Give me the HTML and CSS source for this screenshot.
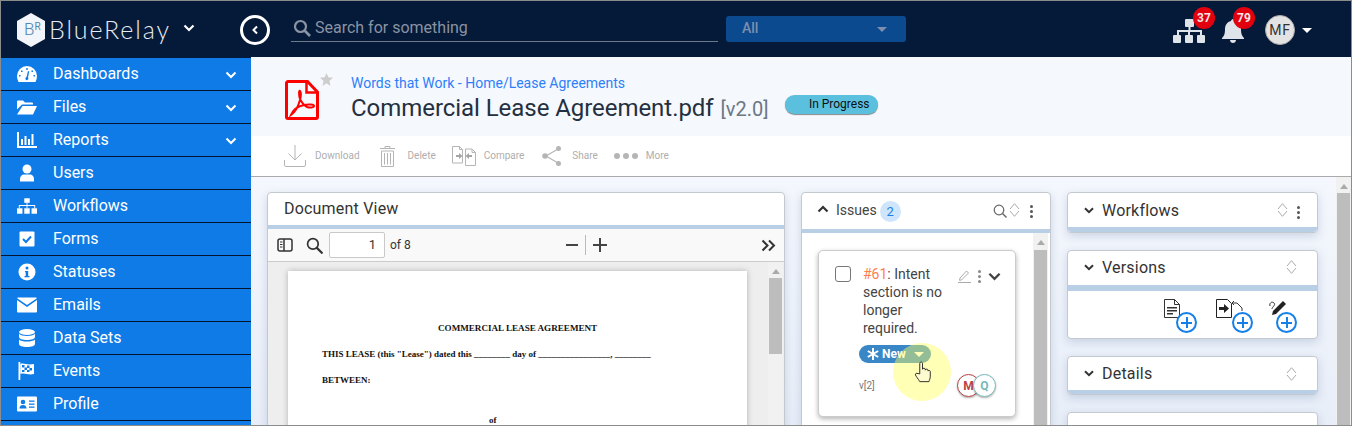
FILE: index.html
```html
<!DOCTYPE html>
<html lang="en">
<head>
<meta charset="utf-8">
<title>BlueRelay - Commercial Lease Agreement</title>
<link rel="stylesheet" href="styles.css">
</head>
<body>
<div class="app">
  <header class="topbar">
    <div class="brand">
      <svg class="hex" viewBox="0 0 28 34"><path d="M14 0 28 8v18l-14 8-14-8V8z" fill="#f2f5f9"/></svg>
      <span class="hex-text"><b>B</b><i>R</i></span>
      <span class="brand-name">BlueRelay</span>
      <svg class="brand-chev" viewBox="0 0 12 8"><path d="M1.500 1.500 6 6l4.500-4.500" fill="none" stroke="#fff" stroke-width="2.200"/></svg>
    </div>
    <div class="back"><svg viewBox="0 0 8 10"><path d="M6 1.500 2.500 5 6 8.500" fill="none" stroke="#fff" stroke-width="2"/></svg></div>
    <div class="search">
      <svg viewBox="0 0 18 18"><circle cx="7.500" cy="7.500" r="5.500" fill="none" stroke="#8a93a3" stroke-width="2.200"/><path d="m11.500 11.500 5.500 5.500" stroke="#8a93a3" stroke-width="2.600"/></svg>
      <span>Search for something</span>
    </div>
    <div class="scope"><span>All</span><i class="caret caret-dim"></i></div>
    <div class="top-right">
      <div class="top-icon org">
        <svg viewBox="0 0 32 24"><g fill="#dfe3ea"><rect x="12" y="0" width="9" height="8" rx="1"/><rect x="0" y="16" width="8" height="8" rx="1"/><rect x="12" y="16" width="8" height="8" rx="1"/><rect x="24" y="16" width="8" height="8" rx="1"/><path d="M15.500 8h2v3H29v5h-2v-3h-10v3h-2v-3H6v3H4v-5h11.500z"/></g></svg>
        <span class="badge">37</span>
      </div>
      <div class="top-icon bell">
        <svg viewBox="0 0 22 24"><path d="M11 0c1 0 2 1 2 2 4 1 6 4 6 8 0 5 1 7 3 9v1H0v-1c2-2 3-4 3-9 0-4 2-7 6-8 0-1 1-2 2-2zM8 21h6c0 2-1.500 3-3 3s-3-1-3-3z" fill="#dfe3ea"/></svg>
        <span class="badge">79</span>
      </div>
      <div class="avatar">MF</div>
      <i class="caret caret-white"></i>
    </div>
  </header>
  <div class="body">
    <nav class="sidebar">
      <a class="nav-item">
        <svg viewBox="0 0 20 16"><path d="M10 0a10 10 0 0 1 10 10c0 2-.5 4-1.500 6h-17C.5 14 0 12 0 10A10 10 0 0 1 10 0z" fill="#fff"/><g fill="#0f7be6"><rect x="9.300" y="2" width="1.400" height="2"/><rect x="4" y="4.500" width="1.500" height="1.500"/><rect x="14.500" y="4.500" width="1.500" height="1.500"/><rect x="2" y="9" width="1.500" height="1.500"/><rect x="16.500" y="9" width="1.500" height="1.500"/><path d="m11 5 1.200.4-1.200 6.100a1.500 1.500 0 1 1-1.500-.4z"/></g></svg>
        <span>Dashboards</span><svg class="chev" viewBox="0 0 12 8"><path d="M1.500 1.500 6 6l4.500-4.500" fill="none" stroke="#fff" stroke-width="2"/></svg>
      </a>
      <a class="nav-item">
        <svg viewBox="0 0 20 15"><path d="M0 2a1 1 0 0 1 1-1h5l2 2h7a1 1 0 0 1 1 1v1H5L0 10z" fill="#fff"/><path d="M5.500 6.500H20L16 15H0z" fill="#fff"/></svg>
        <span>Files</span><svg class="chev" viewBox="0 0 12 8"><path d="M1.500 1.500 6 6l4.500-4.500" fill="none" stroke="#fff" stroke-width="2"/></svg>
      </a>
      <a class="nav-item">
        <svg viewBox="0 0 20 16"><path d="M0 0h2v14h18v2H0z" fill="#fff"/><g fill="#fff"><rect x="4" y="7" width="2" height="6"/><rect x="7.500" y="4" width="2" height="9"/><rect x="11" y="7" width="2" height="6"/><rect x="14.500" y="2" width="2" height="11"/></g></svg>
        <span>Reports</span><svg class="chev" viewBox="0 0 12 8"><path d="M1.500 1.500 6 6l4.500-4.500" fill="none" stroke="#fff" stroke-width="2"/></svg>
      </a>
      <a class="nav-item">
        <svg viewBox="0 0 20 17"><circle cx="10" cy="4.500" r="4.500" fill="#fff"/><path d="M3 17v-2.500C3 11.500 5 10 7 10h6c2 0 4 1.500 4 4.500V17z" fill="#fff"/></svg>
        <span>Users</span>
      </a>
      <a class="nav-item">
        <svg viewBox="0 0 22 17"><g fill="#fff"><rect x="8" y="0" width="6" height="5"/><rect x="0" y="11" width="6" height="6"/><rect x="8" y="11" width="6" height="6"/><rect x="16" y="11" width="6" height="6"/><path d="M10.500 5h1v2.500H20V11h-1V8.500h-7.500V11h-1V8.500H3V11H2V7.500h8.500z"/></g></svg>
        <span>Workflows</span>
      </a>
      <a class="nav-item">
        <svg viewBox="0 0 20 16"><rect x="2.500" y="0.500" width="15" height="15" rx="1" fill="#fff"/><path d="m6 8 3 3 5-5.500" fill="none" stroke="#0f7be6" stroke-width="2"/></svg>
        <span>Forms</span>
      </a>
      <a class="nav-item">
        <svg viewBox="0 0 18 18"><circle cx="9" cy="9" r="8.500" fill="#fff"/><circle cx="9" cy="5" r="1.500" fill="#0f7be6"/><path d="M7 8h3.200v5H11.500v1.300h-5V13h1.200V9.300H7z" fill="#0f7be6"/></svg>
        <span>Statuses</span>
      </a>
      <a class="nav-item">
        <svg viewBox="0 0 20 15"><path d="M1 0h18a1 1 0 0 1 .9.700L10 7.500.100.700A1 1 0 0 1 1 0z" fill="#fff"/><path d="m0 2.500 10 7 10-7V14a1 1 0 0 1-1 1H1a1 1 0 0 1-1-1z" fill="#fff"/></svg>
        <span>Emails</span>
      </a>
      <a class="nav-item">
        <svg viewBox="0 0 18 18"><g fill="#fff"><ellipse cx="9" cy="3" rx="8" ry="3"/><path d="M1 4.800C2.500 6.500 5.500 7 9 7s6.500-.5 8-2.200V8c0 1.700-3.500 3-8 3S1 9.700 1 8z"/><path d="M1 10.500c1.500 1.500 4.500 2 8 2s6.500-.5 8-2V15c0 1.700-3.500 3-8 3s-8-1.300-8-3z"/></g></svg>
        <span>Data Sets</span>
      </a>
      <a class="nav-item">
        <svg viewBox="0 0 18 18"><rect x="0.500" y="0" width="1.800" height="18" fill="#fff"/><path d="M2.300 2c4-1.500 6 1.500 13.700 0v10c-6 1.500-9-1.500-13.700 0z" fill="#fff"/><g fill="#0f7be6"><rect x="4" y="3" width="2.500" height="2.500"/><rect x="9" y="3.500" width="2.500" height="2.500"/><rect x="6.500" y="5.500" width="2.500" height="2.500"/><rect x="11.500" y="6" width="2.500" height="2.500"/><rect x="4" y="8" width="2.500" height="2"/><rect x="9" y="8" width="2.500" height="2"/></g></svg>
        <span>Events</span>
      </a>
      <a class="nav-item">
        <svg viewBox="0 0 20 15"><rect width="20" height="15" rx="1" fill="#fff"/><circle cx="6" cy="5.500" r="2.300" fill="#0f7be6"/><path d="M2.500 12c0-2.500 1.500-3.500 3.500-3.500s3.500 1 3.500 3.500z" fill="#0f7be6"/><g fill="#0f7be6"><rect x="12" y="4" width="5.500" height="1.300"/><rect x="12" y="7" width="5.500" height="1.300"/><rect x="12" y="10" width="5.500" height="1.300"/></g></svg>
        <span>Profile</span>
      </a>
    </nav>
    <main class="main">
      <section class="file-head">
        <div class="pdf-icon">
          <svg viewBox="0 0 34 40"><path d="M1.500 3a1.500 1.500 0 0 1 1.500-1.500h19.500L32.500 12v25a1.500 1.500 0 0 1-1.500 1.500H3A1.500 1.500 0 0 1 1.500 37z" fill="none" stroke="#f00" stroke-width="3"/><path d="M21.500 2v10.500h10.500" fill="none" stroke="#f00" stroke-width="2.500"/><path d="M6 35c3-2 7-8 9-15 1-4 1-8 0-9s-1.500 3 0 8c2 4 5 7 7 8 3 1 7 .5 7-1s-5-2-10-1c-5 1-10 3-13 10z" fill="none" stroke="#f00" stroke-width="2"/></svg>
          <svg class="star" viewBox="0 0 14 14"><path d="m7 0 2 4.700 5 .4-3.800 3.300L11.300 14 7 11 2.700 14l1.100-5.600L0 5.100l5-.4z" fill="#cdcdcd"/></svg>
        </div>
        <div class="file-info">
          <a class="crumb">Words that Work - Home/Lease Agreements</a>
          <div class="title-row">
            <h1>Commercial Lease Agreement.pdf <small>[v2.0]</small></h1>
            <span class="status">In Progress</span>
          </div>
        </div>
      </section>
      <section class="actions">
        <div class="action"><svg class="a-dl" viewBox="0 0 22 22"><path d="M11 0v15M4.500 8.500 11 15l6.500-6.500M.5 15v5a1.500 1.500 0 0 0 1.500 1.500h18a1.500 1.500 0 0 0 1.500-1.500v-5" fill="none" stroke="#b5b5b5"/></svg><span>Download</span></div>
        <div class="action"><svg class="a-del" viewBox="0 0 15 21"><path d="M0 2.500h15M5 2.500V.5h5v2M1.500 5h12v15.500h-12zM4.500 7v11.500M7.500 7v11.500M10.500 7v11.500" fill="none" stroke="#b5b5b5"/></svg><span>Delete</span></div>
        <div class="action"><svg class="a-cmp" viewBox="0 0 24 20"><g fill="none" stroke="#b5b5b5"><path d="M.5.500h7l3 3V17H.5zM13.500 3H20l3.500 3.500v13h-10zM7.500.5v3h3M20 3v3.500h3.500"/></g><path d="M4 8h3V6l3.500 3L7 12v-2H4zM20 8h-3V6l-3.500 3L17 12v-2h3z" fill="#a5a5a5" transform="translate(0 1)"/></svg><span>Compare</span></div>
        <div class="action"><svg class="a-sh" viewBox="0 0 20 20"><path d="M16 3 4 10l12 7" fill="none" stroke="#b5b5b5" stroke-width="1.200"/><circle cx="16.500" cy="2.500" r="2.500" fill="#b5b5b5"/><circle cx="3" cy="10" r="2.800" fill="#b5b5b5"/><circle cx="16.500" cy="17.500" r="2.500" fill="#b5b5b5"/></svg><span>Share</span></div>
        <div class="action"><span class="dots"><i></i><i></i><i></i></span><span>More</span></div>
      </section>
      <section class="workspace">
        <div class="columns">
          <article class="panel doc">
            <h2 class="doc-title">Document View</h2>
            <div class="doc-tools">
              <svg class="t-side" viewBox="0 0 16 14"><rect x="1" y="1" width="14" height="12" rx="2" fill="none" stroke="#333" stroke-width="1.500"/><path d="M7 1v12" stroke="#333" stroke-width="1.500"/><path d="M3 4h2.500M3 6.500h2.500M3 9h2.500" stroke="#333"/></svg>
              <svg class="t-find" viewBox="0 0 16 16"><circle cx="6.500" cy="6.500" r="5" fill="none" stroke="#333" stroke-width="1.600"/><path d="m10 10 5.500 5.500" stroke="#333" stroke-width="2"/></svg>
              <span class="page-box">1</span>
              <span class="page-of">of 8</span>
              <span class="zoom-tools"><span class="minus"></span><span class="zsep"></span><span class="plus"></span></span>
              <svg class="t-more" viewBox="0 0 15 13"><path d="m1.500 1.500 5 5-5 5M8 1.500l5 5-5 5" fill="none" stroke="#333" stroke-width="2"/></svg>
            </div>
            <div class="doc-view">
              <div class="page">
                <p class="p-c">COMMERCIAL LEASE AGREEMENT</p>
                <p>THIS LEASE (this "Lease") dated this ________ day of ________________, ________</p>
                <p>BETWEEN:</p>
                <p class="p-of">of</p>
              </div>
              <div class="sb sb-doc"><i class="up"></i><b></b></div>
            </div>
          </article>
          <article class="panel issues">
            <header class="issues-head">
              <svg class="up-chev" viewBox="0 0 12 8"><path d="M1.500 6.500 6 2l4.500 4.500" fill="none" stroke="#333" stroke-width="2.200"/></svg>
              <span class="issues-title">Issues</span><span class="count">2</span>
              <svg class="i-search" viewBox="0 0 14 14"><circle cx="6" cy="6" r="4.800" fill="none" stroke="#666" stroke-width="1.200"/><path d="m9.500 9.500 4 4" stroke="#666" stroke-width="1.400"/></svg>
              <svg class="sort" viewBox="0 0 11 14"><path d="M1 6 5.500 .7 10 6M1 8 5.500 13.300 10 8" fill="none" stroke="#aaa"/></svg>
              <span class="kebab"><i></i><i></i><i></i></span>
            </header>
            <div class="issues-body">
              <div class="issue-card">
                <span class="check"></span>
                <div class="issue-main">
                  <p class="issue-text"><span class="num">#61</span>: Intent section is no longer required.</p>
                  <span class="pill"><svg viewBox="0 0 12 12"><path d="M6 0v12M.8 3l10.400 6M.8 9l10.400-6" stroke="#fff" stroke-width="2"/></svg>New<i class="caret caret-white"></i></span>
                  <div class="issue-foot">
                    <span class="ver">v[2]</span>
                    <span class="people"><span class="p-m">M</span><span class="p-q">Q</span></span>
                  </div>
                </div>
                <div class="issue-tools">
                  <svg class="pen" viewBox="0 0 13 14"><path d="m2 9 6.500-7 2 2-7 7-2 .3zM0 13.500h13" fill="none" stroke="#aaa"/></svg>
                  <span class="kebab kebab-light"><i></i><i></i><i></i></span>
                  <svg class="down" viewBox="0 0 14 9"><path d="M1.500 1.500 7 7l5.500-5.500" fill="none" stroke="#444" stroke-width="2.500"/></svg>
                </div>
              </div>
              <div class="sb sb-issues"><i class="up"></i><b></b></div>
            </div>
          </article>
          <div class="side">
            <article class="panel side-panel sp-work">
              <header class="side-head">
                <svg class="s-chev" viewBox="0 0 10 7"><path d="M1 1.200 5 5.200l4-4" fill="none" stroke="#333" stroke-width="2"/></svg>
                <span>Workflows</span>
                <svg class="sort" viewBox="0 0 11 14"><path d="M1 6 5.500 .7 10 6M1 8 5.500 13.300 10 8" fill="none" stroke="#aaa"/></svg>
                <span class="kebab"><i></i><i></i><i></i></span>
              </header>
            </article>
            <article class="panel side-panel sp-ver">
              <header class="side-head">
                <svg class="s-chev" viewBox="0 0 10 7"><path d="M1 1.200 5 5.200l4-4" fill="none" stroke="#333" stroke-width="2"/></svg>
                <span>Versions</span>
                <svg class="sort sort-end" viewBox="0 0 11 14"><path d="M1 6 5.500 .7 10 6M1 8 5.500 13.300 10 8" fill="none" stroke="#aaa"/></svg>
              </header>
              <div class="version-tools">
                <span class="v-tool v1">
                  <svg viewBox="0 0 16 19"><path d="M.5.500h10l5 5v13H.5zM10.500.5v5h5" fill="none" stroke="#333"/><path d="M3 8h10v1.500H3zM3 11h10v1.500H3zM3 14h6v1.500H3z" fill="#333"/></svg>
                  <i class="plus-c"></i>
                </span>
                <span class="v-tool v2">
                  <svg viewBox="0 0 27 19"><path d="M.5.500h11l4 4v14H.5z" fill="#fff" stroke="#222"/><path d="M3 8h5V5l5 4.500-5 4.500v-3H3z" fill="#222"/><path d="M17 4h4l5 5v3M18 2l-2 2 2 2" fill="none" stroke="#333"/></svg>
                  <i class="plus-c"></i>
                </span>
                <span class="v-tool v3">
                  <svg viewBox="0 0 18 16"><path d="m4 12 10-10 3 3-10 10-4 1z" fill="#222"/><path d="M1 7c-1-3 2-5 4-3s-2 4-2 6" fill="none" stroke="#333"/></svg>
                  <i class="plus-c"></i>
                </span>
              </div>
            </article>
            <article class="panel side-panel sp-det">
              <header class="side-head">
                <svg class="s-chev" viewBox="0 0 10 7"><path d="M1 1.200 5 5.200l4-4" fill="none" stroke="#333" stroke-width="2"/></svg>
                <span>Details</span>
                <svg class="sort sort-end" viewBox="0 0 11 14"><path d="M1 6 5.500 .7 10 6M1 8 5.500 13.300 10 8" fill="none" stroke="#aaa"/></svg>
              </header>
            </article>
            <article class="panel side-panel side-stub"></article>
          </div>
        </div>
        <div class="sb sb-main"><i class="up"></i><b></b></div>
      </section>
    </main>
  </div>
  <div class="pointer">
    <svg viewBox="0 0 18 24"><path d="M6 14V3c0-2.500 3-2.500 3 0v6c0-1.500 3-1.500 3 0v1c0-1.500 3-1.500 3 0v1c0-1 2.500-1 2.500 .5v5c0 3-1 4-1.500 6H6c-1-2-2-3-4-6-1.500-2-.5-3.500 1-3z" fill="#fffbd0" stroke="#222" stroke-width="1"/></svg>
  </div>
</div>
</body>
</html>
```
FILE: styles.css
```css
* { box-sizing: border-box; }
html, body { margin: 0; padding: 0; }
body { width: 1352px; height: 426px; overflow: hidden; font-family: Roboto, "Liberation Sans", sans-serif; color: #333; }
p, h1, h2 { margin: 0; font-weight: 400; }
svg { display: block; flex: none; }

.app { position: relative; width: 1352px; height: 426px; border: 1px solid #8c8c8c; overflow: hidden; display: flex; flex-direction: column; background: #f4f7fc; }

.topbar { height: 56px; flex: none; background: #051938; display: flex; align-items: center; }
.brand { position: relative; width: 239px; padding-left: 16px; display: flex; align-items: center; height: 100%; }
.hex { width: 28px; height: 34px; margin-top: 1px; }
.hex-text { position: absolute; left: 23px; top: 20px; color: #4f86b4; display: flex; line-height: 16px; }
.hex-text b { font-weight: 300; font-size: 17px; }
.hex-text i { font-style: normal; font-size: 10px; line-height: 12px; }
.brand-name { font-family: Lato, sans-serif; font-weight: 300; font-size: 25px; letter-spacing: 1.9px; color: #e8ecf2; margin-left: 4px; line-height: 34px; }
.brand-chev { width: 12px; height: 8px; margin-left: 12px; margin-top: -2px; }
.back { width: 30px; height: 30px; border: 3px solid #fff; border-radius: 50%; display: flex; align-items: center; justify-content: center; margin-top: 1px; }
.back svg { width: 8px; height: 10px; }
.search { margin-left: 21px; width: 427px; height: 29px; border-bottom: 1px solid #6f7888; display: flex; align-items: center; padding-left: 2px; margin-top: -4px; }
.search svg { width: 18px; height: 18px; margin-top: 3px; }
.search span { font-size: 16px; color: #8a93a3; margin-left: 4px; margin-top: 2px; }
.scope { margin-left: 8px; width: 180px; height: 26px; border-radius: 3px; background: #0b4a8f; display: flex; align-items: center; justify-content: space-between; padding: 0 19px 0 16px; }
.scope span { font-size: 14px; font-weight: 500; color: #7d8fad; margin-top: -2px; }
.caret { display: block; width: 0; height: 0; border-left: 5px solid transparent; border-right: 5px solid transparent; border-top: 5px solid #fff; }
.caret-dim { border-top-color: #7d8fad; }
.top-right { margin-left: auto; display: flex; align-items: center; padding-right: 39px; }
.top-icon { position: relative; }
.org svg { width: 32px; height: 24px; margin-top: 3px; }
.bell { margin-left: 17px; }
.bell svg { width: 22px; height: 24px; margin-top: 3px; }
.badge { position: absolute; top: -9px; width: 22px; height: 22px; border-radius: 50%; background: #e2000f; color: #f5e6e6; font-size: 12px; font-weight: 700; display: flex; align-items: center; justify-content: center; }
.org .badge { left: 20px; }
.bell .badge { left: 11px; }
.avatar { margin-left: 21px; width: 30px; height: 30px; border-radius: 50%; background: #e3e3e3; border: 1px solid #aaa; color: #333; font-size: 14px; letter-spacing: .8px; display: flex; align-items: center; justify-content: center; margin-top: 2px; }
.top-right .caret { margin-left: 7px; margin-top: 2px; }

.body { flex: 1; display: flex; min-height: 0; }
.sidebar { width: 250px; flex: none; background: #0f7be6; border-top: 1px solid #051938; }
.nav-item { height: 33px; display: flex; align-items: center; border-bottom: 1px solid #04142e; color: #fff; font-size: 16px; position: relative; padding-bottom: 1px; }
.nav-item > svg:first-child { width: 20px; height: 18px; margin-left: 16px; }
.nav-item > span { margin-left: 16px; }
.nav-item .chev { width: 12px; height: 8px; margin-left: auto; margin-right: 14px; margin-top: 2px; }

.main { flex: 1; min-width: 0; display: flex; flex-direction: column; }
.file-head { height: 79px; flex: none; background: #f5f8fd; display: flex; padding: 23px 0 0 34px; }
.pdf-icon { position: relative; width: 34px; height: 40px; }
.pdf-icon > svg:first-child { width: 34px; height: 40px; }
.star { position: absolute; left: 35px; top: -7px; width: 13px; height: 13px; }
.file-info { margin-left: 32px; margin-top: -5px; }
.crumb { display: block; font-size: 14px; line-height: 16px; color: #2d7ff9; }
.title-row { display: flex; align-items: center; margin-top: 1px; }
h1 { font-size: 24px; line-height: 32px; color: #243040; letter-spacing: -.05px; }
h1 small { font-size: 20px; color: #6c7785; letter-spacing: 0; margin-left: 1px; }
.status { margin-left: 16px; width: 93px; height: 19px; border-radius: 10px; background: #5bc0de; box-shadow: 0 1px 1px #888; color: #111; font-size: 12px; line-height: 18px; text-align: right; padding-right: 8px; margin-top: -8px; }

.actions { height: 41px; flex: none; background: #fff; border-bottom: 1px solid #aaa; display: flex; align-items: center; padding-left: 33px; }
.action { display: flex; align-items: center; font-size: 10px; color: #aeaeae; }
.action > span:last-child { line-height: 12px; }
.a-dl { width: 22px; height: 22px; margin-right: 9px; }
.a-del { width: 15px; height: 21px; margin: 0 13px 0 20px; }
.a-cmp { width: 24px; height: 20px; margin: 0 8px 0 16px; }
.a-sh { width: 20px; height: 20px; margin: 0 10px 0 18px; }
.dots { display: flex; gap: 3px; margin: 0 8px 0 16px; }
.dots i { width: 6px; height: 6px; border-radius: 50%; background: #b5b5b5; }

.workspace { flex: 1; min-height: 0; display: flex; background: linear-gradient(#f4f7fd, #e8eef8); overflow: hidden; }
.columns { flex: 1; display: flex; align-items: flex-start; gap: 16px; padding: 15px 18px 0 16px; }
.panel { background: #fff; border-radius: 4px; border: 1px solid #c4c8cf; box-shadow: 0 3px 10px rgba(70,100,150,.22); }

.doc { width: 518px; flex: none; height: 300px; }
.doc-title { height: 32px; font-size: 16px; font-weight: 400; padding: 6px 16px 0; color: #333; line-height: 20px; letter-spacing: .2px; }
.doc-tools { height: 37px; border-top: 4px solid #b8cfe6; border-bottom: 1px solid #ccc; background: #f9f9f9; display: flex; align-items: center; }
.t-side { width: 16px; height: 14px; margin-left: 9px; }
.t-find { width: 17px; height: 17px; margin-left: 13px; }
.page-box { width: 56px; height: 26px; border: 1px solid #c9c9c9; border-radius: 2px; background: #fff; margin-left: 6px; text-align: right; padding-right: 8px; font-size: 13px; line-height: 24px; color: #333; }
.page-of { margin-left: 5px; font-size: 12px; color: #333; }
.zoom-tools { display: flex; align-items: center; margin-left: 155px; }
.minus { width: 12px; height: 2px; background: #444; }
.zsep { width: 1px; height: 20px; background: #bbb; margin: 0 7px; }
.plus { width: 14px; height: 14px; background: linear-gradient(#444,#444) center/14px 2px no-repeat, linear-gradient(#444,#444) center/2px 14px no-repeat; }
.t-more { width: 15px; height: 13px; margin-left: auto; margin-right: 8px; }
.doc-view { display: flex; height: 234px; background: #eee; padding-left: 20px; }
.page { width: 459px; flex: none; margin-top: 9px; background: #fff; box-shadow: 0 0 6px rgba(0,0,0,.25); padding: 51px 0 0 34px; font-family: "Liberation Serif", serif; font-size: 9px; color: #111; }
.page p { font-weight: 700; line-height: 12px; margin-bottom: 14.500px; white-space: nowrap; }
.page .p-c { padding-left: 116px; font-size: 9.100px; margin-bottom: 13.500px; }
.page .p-of { margin-top: 28px; padding-left: 167px; }
.sb { background: #f1f1f1; display: flex; flex-direction: column; position: relative; }
.sb .up { display: block; width: 0; height: 0; margin: 7px auto 5px; border-left: 4px solid transparent; border-right: 4px solid transparent; border-bottom: 5px solid #aaa; }
.sb b { display: block; background: #bdbdbd; margin: 0 1px; }
.sb-doc { width: 15px; margin-left: 21px; }
.sb-doc b { height: 76px; }
.sb-doc .up { margin-bottom: 4px; }

.issues { width: 250px; flex: none; height: 300px; }
.issues-head { height: 40px; border-bottom: 4px solid #b8cfe6; display: flex; align-items: center; padding: 0 17px 3px 15px; }
.up-chev { width: 12px; height: 8px; margin-top: -2px; }
.issues-title { margin-left: 7px; font-size: 14px; color: #444; }
.count { margin-left: 3px; width: 21px; height: 21px; border-radius: 50%; background: #cfe5fb; color: #1d7fe6; font-size: 13px; display: flex; align-items: center; justify-content: center; margin-top: 3px; }
.i-search { width: 14px; height: 14px; margin-left: auto; margin-top: 3px; }
.sort { width: 11px; height: 14px; margin-left: 2px; }
.kebab { display: flex; flex-direction: column; gap: 2px; margin-left: 10px; margin-top: 4px; }
.kebab i { width: 3px; height: 3px; border-radius: 50%; background: #555; }
.kebab-light { margin-left: 0; margin-top: 0; }
.kebab-light i { background: #888; }
.issues-body { display: flex; padding-left: 16px; height: 260px; }
.issue-card { width: 198px; flex: none; height: 167px; margin-top: 17px; background: #fff; border: 1px solid #ccc; border-radius: 5px; box-shadow: 0 2px 5px rgba(0,0,0,.3); display: flex; padding: 17px 0 0 16px; }
.check { width: 16px; height: 16px; flex: none; border: 1px solid #777; border-radius: 3px; margin-top: -2px; }
.issue-main { width: 80px; margin-left: 12px; flex: none; }
.issue-text { font-size: 14px; line-height: 18px; color: #444; margin-top: -3px; }
.num { color: #ff7f50; }
.pill { width: 72px; height: 18px; margin: 8px 0 0 -4px; border-radius: 9px; background: #3a87c8; color: #fff; font-size: 12px; font-weight: 700; display: flex; align-items: center; padding-left: 8px; }
.pill svg { width: 12px; height: 12px; margin-right: 3px; }
.pill .caret { margin-left: 8px; }
.issue-foot { display: flex; align-items: center; margin: 11px 0 0 -4px; width: 137px; }
.ver { font-size: 10px; color: #777; }
.people { margin-left: auto; display: flex; }
.people span { width: 23px; height: 23px; border-radius: 50%; background: #fff; font-size: 12px; font-weight: 700; display: flex; align-items: center; justify-content: center; box-shadow: 0 1px 2px rgba(0,0,0,.3); }
.p-m { border: 1px solid #b44; color: #b44; }
.p-q { border: 1px solid #7bb; color: #7bb; margin-left: -7px; }
.issue-tools { display: flex; align-items: center; height: 14px; margin-left: 15px; margin-top: 1px; }
.pen { width: 13px; height: 14px; }
.issue-tools .kebab { margin-left: 7px; margin-top: 0; }
.down { width: 13px; height: 9px; margin-left: 7px; }
.sb-issues { width: 15px; margin-left: 17px; }
.sb-issues b { height: 230px; }

.side { width: 251px; flex: none; display: flex; flex-direction: column; gap: 17px; }
.side-panel { flex: none; }
.side-head { height: 39px; border-bottom: 5px solid #b8cfe6; display: flex; align-items: center; padding: 0 17px 0 16px; font-size: 16px; color: #333; letter-spacing: .2px; border-radius: 0 0 4px 4px; }
.s-chev { width: 10px; height: 7px; margin-right: 8px; }
.side-head .sort { margin-left: auto; }
.side-head .kebab { margin-left: 9px; }
.side-head .sort-end { margin-right: 3px; }
.sp-ver .side-head { height: 40px; border-bottom-width: 6px; border-radius: 0; padding-bottom: 2px; }
.sp-det .side-head { height: 37px; border-bottom-width: 4px; }
.version-tools { height: 47px; position: relative; display: flex; padding: 8px 0 0 96px; }
.v-tool { position: relative; display: block; }
.v-tool svg { width: 100%; height: 100%; }
.v1 { width: 16px; height: 19px; }
.v2 { width: 27px; height: 19px; margin-left: 36px; }
.v3 { width: 18px; height: 16px; margin-left: 26px; }
.plus-c { position: absolute; right: -17px; bottom: -15px; width: 21px; height: 21px; border-radius: 50%; border: 2px solid #1580e8; background: linear-gradient(#1580e8,#1580e8) center/11px 2px no-repeat, linear-gradient(#1580e8,#1580e8) center/2px 11px no-repeat, #fff; }
.v2 .plus-c { right: -10px; }
.v3 .plus-c { right: -10px; bottom: -18px; }
.side-stub { height: 40px; }
.sb-main { width: 15px; flex: none; }
.sb-main .up { margin: 7px auto 4px; }
.sb-main b { flex: 1; }

.pointer { position: absolute; left: 892px; top: 342px; width: 58px; height: 58px; border-radius: 50%; background: rgba(255,255,90,.45); display: flex; align-items: center; justify-content: center; }
.pointer svg { width: 17px; height: 22px; margin-top: -1px; margin-left: 1px; }
```
